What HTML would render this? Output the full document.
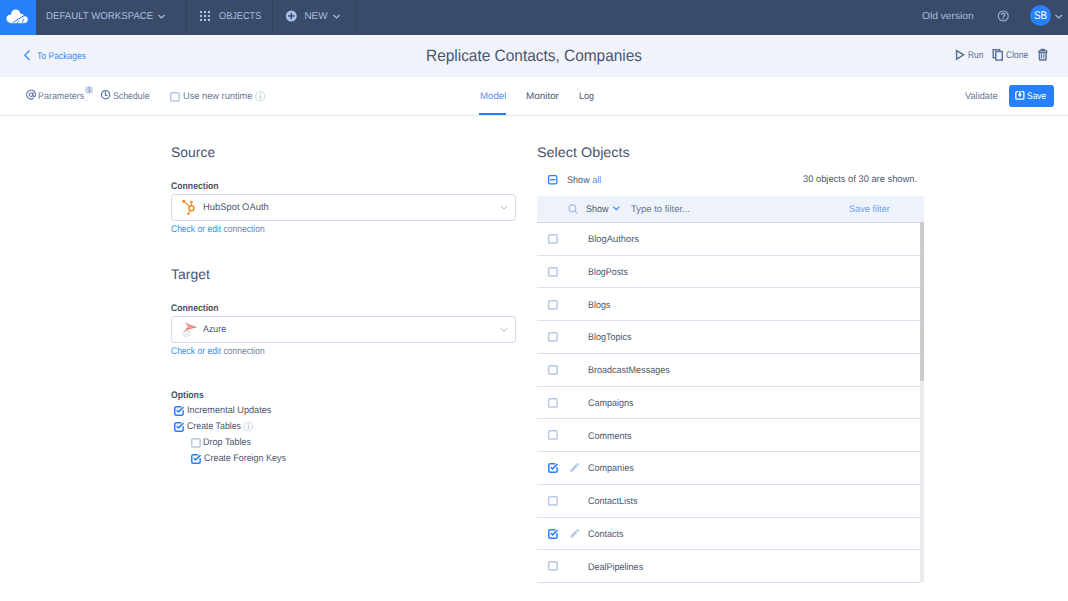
<!DOCTYPE html>
<html><head><meta charset="utf-8"><style>
html,body{margin:0;padding:0;width:1068px;height:601px;overflow:hidden;background:#fff;font-family:"Liberation Sans",sans-serif}
.t{position:absolute;white-space:nowrap;text-rendering:geometricPrecision}
svg.t{overflow:visible}
</style></head><body>
<div class="t" style="left:0px;top:0px;width:1068px;height:35px;background:#394b69"></div>
<div class="t" style="left:0px;top:0px;width:36px;height:35px;background:#2680fb"></div>
<svg class="t" style="left:0;top:0" width="36" height="35" viewBox="0 0 36 35">
<g fill="#fff"><circle cx="15.7" cy="14" r="4.6"/><circle cx="10.6" cy="18.6" r="4.2"/><circle cx="20.8" cy="17.2" r="3.4"/><circle cx="24.4" cy="19.6" r="3.4"/><rect x="10.4" y="17" width="14" height="6.2"/></g>
<path d="M12.8 22.6 L24 15.6" stroke="#2680fb" stroke-width="1" fill="none"/><path d="M22.3 23.2 L23.8 18.8" stroke="#2680fb" stroke-width="0.9"/><path d="M16.6 23.3 L19.5 20.8" stroke="#2680fb" stroke-width="0.8"/>
</svg>
<div class="t" style="left:186px;top:0px;width:1px;height:35px;background:#34435d"></div>
<div class="t" style="left:272px;top:0px;width:1px;height:35px;background:#34435d"></div>
<div class="t" style="left:355px;top:0px;width:1px;height:35px;background:#34435d"></div>
<div class="t" style="left:46.28px;top:12px;font-size:9.9px;line-height:9.9px;color:#a9bde0;font-weight:400;transform:scaleX(0.9770);transform-origin:0 0;">DEFAULT WORKSPACE</div>
<svg class="t" style="left:157px;top:13px" width="9" height="7"><path d="M1.5 2 L4.5 5 L7.5 2" stroke="#a9bde0" stroke-width="1.2" fill="none"/></svg>
<svg class="t" style="left:198px;top:9px" width="14" height="14"><rect x="1.95" y="1.95" width="2.1" height="2.1" fill="#a9c1e8"/><rect x="1.95" y="5.95" width="2.1" height="2.1" fill="#a9c1e8"/><rect x="1.95" y="9.95" width="2.1" height="2.1" fill="#a9c1e8"/><rect x="5.95" y="1.95" width="2.1" height="2.1" fill="#a9c1e8"/><rect x="5.95" y="5.95" width="2.1" height="2.1" fill="#a9c1e8"/><rect x="5.95" y="9.95" width="2.1" height="2.1" fill="#a9c1e8"/><rect x="9.95" y="1.95" width="2.1" height="2.1" fill="#a9c1e8"/><rect x="9.95" y="5.95" width="2.1" height="2.1" fill="#a9c1e8"/><rect x="9.95" y="9.95" width="2.1" height="2.1" fill="#a9c1e8"/></svg>
<div class="t" style="left:218.59px;top:12px;font-size:9.9px;line-height:9.9px;color:#a9bde0;font-weight:400;transform:scaleX(0.9297);transform-origin:0 0;">OBJECTS</div>
<svg class="t" style="left:284px;top:10px" width="14" height="14"><circle cx="7.3" cy="6.05" r="5.45" fill="#a9c1e8"/><path d="M7.3 2.9 V9.2 M4.1 6.05 H10.5" stroke="#394b69" stroke-width="1.45"/></svg>
<div class="t" style="left:304.46px;top:12px;font-size:9.9px;line-height:9.9px;color:#a9bde0;font-weight:400;">NEW</div>
<svg class="t" style="left:332px;top:13px" width="9" height="7"><path d="M1.5 2 L4.5 5 L7.5 2" stroke="#a9bde0" stroke-width="1.2" fill="none"/></svg>
<div class="t" style="left:921.74px;top:12px;font-size:9.9px;line-height:9.9px;color:#a9bde0;font-weight:400;transform:scaleX(1.0346);transform-origin:0 0;">Old version</div>
<svg class="t" style="left:996px;top:10px" width="14" height="13"><circle cx="7.3" cy="6" r="4.95" stroke="#94acd6" stroke-width="1.1" fill="none"/><path d="M5.6 4.9 Q5.6 3.1 7.3 3.1 Q9 3.1 9 4.6 Q9 5.5 8 6 Q7.3 6.4 7.3 7.3" stroke="#9cb4dd" stroke-width="1.3" fill="none"/><circle cx="7.3" cy="8.7" r="0.8" fill="#9cb4dd"/></svg>
<div class="t" style="left:1030px;top:5px;width:21px;height:21px;border-radius:50%;background:#2680fb"></div>
<div class="t" style="left:1033.86px;top:11px;font-size:11.2px;line-height:11.2px;color:#fff;font-weight:400;transform:scaleX(0.8711);transform-origin:0 0;">SB</div>
<svg class="t" style="left:1054px;top:13px" width="10" height="7"><path d="M1.5 2 L4.8 5 L8 2" stroke="#a9bde0" stroke-width="1.2" fill="none"/></svg>
<div class="t" style="left:0px;top:35px;width:1068px;height:42px;background:#f0f3f9"></div>
<svg class="t" style="left:22px;top:49px" width="10" height="13"><path d="M7.5 1.5 L2.8 6.3 L7.5 11" stroke="#3c8bf6" stroke-width="1.3" fill="none"/></svg>
<div class="t" style="left:37.18px;top:52px;font-size:9.6px;line-height:9.6px;color:#3c8bf6;font-weight:400;transform:scaleX(0.8929);transform-origin:0 0;">To Packages</div>
<div class="t" style="left:425.92px;top:48px;font-size:16.4px;line-height:16.4px;color:#4a5670;font-weight:400;transform:scaleX(0.9412);transform-origin:0 0;">Replicate Contacts, Companies</div>
<svg class="t" style="left:954px;top:48px" width="12" height="13"><path d="M2.6 2.6 L9.6 6.85 L2.6 11.1 Z" stroke="#5a6f96" stroke-width="1.45" stroke-linejoin="miter" fill="none"/></svg>
<div class="t" style="left:967.78px;top:51px;font-size:9.6px;line-height:9.6px;color:#5a6f96;font-weight:400;transform:scaleX(0.8691);transform-origin:0 0;">Run</div>
<svg class="t" style="left:991px;top:48px" width="14" height="14"><rect x="2.2" y="1.7" width="6.4" height="8" stroke="#5a6f96" stroke-width="1.4" fill="none"/><rect x="4.8" y="3.5" width="6.5" height="8.6" stroke="#5a6f96" stroke-width="1.4" fill="#f0f3f9"/></svg>
<div class="t" style="left:1005.73px;top:51px;font-size:9.6px;line-height:9.6px;color:#5a6f96;font-weight:400;transform:scaleX(0.8846);transform-origin:0 0;">Clone</div>
<svg class="t" style="left:1036px;top:48px" width="13" height="14"><rect x="2.8" y="2.7" width="8" height="2.1" rx="0.9" stroke="#5a6f96" stroke-width="1.4" fill="none"/><path d="M4.9 2.6 V1.9 Q4.9 1.3 5.5 1.3 H8.1 Q8.7 1.3 8.7 1.9 V2.6" stroke="#5a6f96" stroke-width="1.2" fill="none"/><path d="M3.5 5.2 V11.2 Q3.5 12.1 4.4 12.1 H9.2 Q10.1 12.1 10.1 11.2 V5.2" stroke="#5a6f96" stroke-width="1.5" fill="none"/><path d="M5.6 6.3 V10.6 M7.9 6.3 V10.6" stroke="#5a6f96" stroke-width="1.1"/></svg>
<div class="t" style="left:0px;top:115px;width:1068px;height:1px;background:#e6ebf2"></div>
<svg class="t" style="left:26px;top:89px" width="11" height="11"><circle cx="5.1" cy="5.6" r="1.9" stroke="#5f75a0" stroke-width="1.1" fill="none"/><path d="M7 3.6 V6.6 Q7.1 7.9 8.3 7.7 Q9.6 7.3 9.6 5.4 A4.5 4.5 0 1 0 7.6 9.3" stroke="#5f75a0" stroke-width="1.1" fill="none"/></svg>
<div class="t" style="left:38.14px;top:92px;font-size:9.6px;line-height:9.6px;color:#6a7894;font-weight:400;transform:scaleX(0.9303);transform-origin:0 0;">Parameters</div>
<div class="t" style="left:85px;top:85.6px;width:8.4px;height:8.4px;border-radius:50%;background:#cbd9f0"></div>
<div class="t" style="left:87.86px;top:87px;font-size:7px;line-height:7px;color:#56627a;font-weight:400;transform:scaleX(0.6977);transform-origin:0 0;">1</div>
<svg class="t" style="left:100px;top:89px" width="12" height="12"><circle cx="5.6" cy="5.7" r="4.1" stroke="#5f75a0" stroke-width="1.25" fill="none"/><path d="M5.4 2.7 V6.4 H7.5" stroke="#5f75a0" stroke-width="1.1" fill="none"/></svg>
<div class="t" style="left:112.61px;top:92px;font-size:9.6px;line-height:9.6px;color:#6a7894;font-weight:400;transform:scaleX(0.9140);transform-origin:0 0;">Schedule</div>
<svg class="t" style="left:169.90px;top:91.60px" width="12" height="11"><rect x="0.7" y="0.7" width="8.4" height="8.4" rx="1.1" stroke="#b6c8e8" stroke-width="1.5" fill="#fff"/></svg>
<div class="t" style="left:182.51px;top:92px;font-size:9.6px;line-height:9.6px;color:#6a7894;font-weight:400;transform:scaleX(0.9654);transform-origin:0 0;">Use new runtime</div>
<svg class="t" style="left:255px;top:91px" width="11" height="11"><circle cx="5.3" cy="5.4" r="4.6" stroke="#c3d1ea" stroke-width="0.9" fill="none"/><path d="M5.3 4.6 V8.2" stroke="#9fb3d6" stroke-width="1"/><circle cx="5.3" cy="3" r="0.6" fill="#9fb3d6"/></svg>
<div class="t" style="left:479.97px;top:92px;font-size:9.6px;line-height:9.6px;color:#5b8ef2;font-weight:400;transform:scaleX(1.0094);transform-origin:0 0;">Model</div>
<div class="t" style="left:479px;top:113px;width:27px;height:2px;background:#2680fb"></div>
<div class="t" style="left:526.06px;top:92px;font-size:9.6px;line-height:9.6px;color:#4b586d;font-weight:400;transform:scaleX(1.0288);transform-origin:0 0;">Monitor</div>
<div class="t" style="left:579.33px;top:92px;font-size:9.6px;line-height:9.6px;color:#4b586d;font-weight:400;transform:scaleX(0.9320);transform-origin:0 0;">Log</div>
<div class="t" style="left:965.46px;top:92px;font-size:9.6px;line-height:9.6px;color:#6a7894;font-weight:400;transform:scaleX(0.9608);transform-origin:0 0;">Validate</div>
<div class="t" style="left:1009px;top:85px;width:45px;height:21.5px;background:#2680fb;border-radius:3px"></div>
<svg class="t" style="left:1014px;top:90px" width="12" height="11"><path d="M4.3 1.6 H2.8 Q1.8 1.6 1.8 2.6 V8.2 Q1.8 9.2 2.8 9.2 H8.9 Q9.9 9.2 9.9 8.2 V2.6 Q9.9 1.6 8.9 1.6 H7.4" stroke="#fff" stroke-width="1.25" fill="none"/><path d="M5.85 0.9 V5" stroke="#fff" stroke-width="1.3"/><path d="M3.6 4.3 H8.1 L5.85 7.3 Z" fill="#fff"/></svg>
<div class="t" style="left:1027.33px;top:92px;font-size:9.6px;line-height:9.6px;color:#fff;font-weight:400;transform:scaleX(0.8792);transform-origin:0 0;">Save</div>
<div class="t" style="left:170.85px;top:146px;font-size:13.8px;line-height:13.8px;color:#4a5670;font-weight:400;transform:scaleX(1.0102);transform-origin:0 0;">Source</div>
<div class="t" style="left:171.20px;top:182px;font-size:9.6px;line-height:9.6px;color:#485366;font-weight:700;transform:scaleX(0.9028);transform-origin:0 0;">Connection</div>
<div class="t" style="left:171px;top:194px;width:343px;height:25px;border:1px solid #d3ddef;border-radius:3px;background:#fff"></div>
<svg class="t" style="left:176px;top:195px" width="30" height="25"><g fill="#f5891f" stroke="#f5891f"><path d="M15.4 8.2 V10.8 M7.7 6.2 L13.3 11.1 M12.3 18.9 L14.1 15.4" stroke-width="1.05" fill="none"/><circle cx="15.4" cy="13.2" r="2.55" stroke-width="1.5" fill="none"/><circle cx="15.4" cy="7.1" r="1.35" stroke="none"/><circle cx="7.7" cy="6.2" r="1.45" stroke="none"/><circle cx="12.3" cy="18.9" r="1.15" stroke="none"/></g></svg>
<div class="t" style="left:202.50px;top:203px;font-size:9.6px;line-height:9.6px;color:#4b586d;font-weight:400;transform:scaleX(0.9779);transform-origin:0 0;">HubSpot OAuth</div>
<svg class="t" style="left:500px;top:205px" width="9" height="6"><path d="M1 1.2 L4 4.2 L7 1.2" stroke="#a5b7d6" stroke-width="1" fill="none"/></svg>
<div class="t" style="left:171.12px;top:225px;font-size:9.6px;line-height:9.6px;color:#3c8bf6;font-weight:400;transform:scaleX(0.8867);transform-origin:0 0;">Check or edit <span style="color:#75839f">connection</span></div>
<div class="t" style="left:171.27px;top:268px;font-size:13.8px;line-height:13.8px;color:#4a5670;font-weight:400;transform:scaleX(1.0145);transform-origin:0 0;">Target</div>
<div class="t" style="left:171.20px;top:304px;font-size:9.6px;line-height:9.6px;color:#485366;font-weight:700;transform:scaleX(0.9028);transform-origin:0 0;">Connection</div>
<div class="t" style="left:171px;top:316px;width:343px;height:25px;border:1px solid #d3ddef;border-radius:3px;background:#fff"></div>
<svg class="t" style="left:176px;top:317px" width="30" height="25"><ellipse cx="10.6" cy="16.4" rx="3.8" ry="3.2" fill="#f1f2f5" stroke="#d9dce2" stroke-width="0.9"/><path d="M9.2 5.8 C12 7.4 16 9 20.4 10.2 C16 11 12 12.6 8.2 14.6 C10 12.4 11.2 10.4 11.2 8.8 Z" fill="#f6b3b3"/><path d="M9.2 5.8 C12 7.4 16 9 20.4 10.2 M11.2 8.4 L17.6 10.2 M10.2 11.6 L17 10.6 M8.2 14.6 C11 12.4 14 11 20.4 10.2" stroke="#e46a6a" stroke-width="0.6" fill="none"/></svg>
<div class="t" style="left:202.75px;top:325px;font-size:9.6px;line-height:9.6px;color:#4b586d;font-weight:400;transform:scaleX(0.9241);transform-origin:0 0;">Azure</div>
<svg class="t" style="left:500px;top:327.2px" width="9" height="6"><path d="M1 1.2 L4 4.2 L7 1.2" stroke="#a5b7d6" stroke-width="1" fill="none"/></svg>
<div class="t" style="left:171.12px;top:347px;font-size:9.6px;line-height:9.6px;color:#3c8bf6;font-weight:400;transform:scaleX(0.8867);transform-origin:0 0;">Check or edit <span style="color:#75839f">connection</span></div>
<div class="t" style="left:171.30px;top:391px;font-size:9.6px;line-height:9.6px;color:#485366;font-weight:700;transform:scaleX(0.9033);transform-origin:0 0;">Options</div>
<svg class="t" style="left:174.20px;top:406.20px" width="12" height="11"><path d="M7.3 0.75 H2.2 Q0.75 0.75 0.75 2.2 V7.7 Q0.75 9.15 2.2 9.15 H7.7 Q9.15 9.15 9.15 7.7 V4.3" stroke="#2680fb" stroke-width="1.5" fill="none"/><path d="M2.8 4.1 L4.5 5.9 L9.5 1.1" stroke="#2680fb" stroke-width="1.5" fill="none"/></svg>
<div class="t" style="left:186.73px;top:406px;font-size:9.6px;line-height:9.6px;color:#4b586d;font-weight:400;transform:scaleX(0.9535);transform-origin:0 0;">Incremental Updates</div>
<svg class="t" style="left:174.20px;top:422.20px" width="12" height="11"><path d="M7.3 0.75 H2.2 Q0.75 0.75 0.75 2.2 V7.7 Q0.75 9.15 2.2 9.15 H7.7 Q9.15 9.15 9.15 7.7 V4.3" stroke="#2680fb" stroke-width="1.5" fill="none"/><path d="M2.8 4.1 L4.5 5.9 L9.5 1.1" stroke="#2680fb" stroke-width="1.5" fill="none"/></svg>
<div class="t" style="left:187.11px;top:422px;font-size:9.6px;line-height:9.6px;color:#4b586d;font-weight:400;transform:scaleX(0.9147);transform-origin:0 0;">Create Tables</div>
<svg class="t" style="left:243px;top:421px" width="11" height="11"><circle cx="5.3" cy="5.5" r="4.4" stroke="#c3d1ea" stroke-width="0.9" fill="none"/><path d="M5.3 4.7 V8.2" stroke="#a8bbdc" stroke-width="1"/><circle cx="5.3" cy="3.2" r="0.6" fill="#a8bbdc"/></svg>
<svg class="t" style="left:191.20px;top:438.20px" width="12" height="11"><rect x="0.7" y="0.7" width="8.4" height="8.4" rx="1.1" stroke="#b6c8e8" stroke-width="1.5" fill="#fff"/></svg>
<div class="t" style="left:203.43px;top:438px;font-size:9.6px;line-height:9.6px;color:#4b586d;font-weight:400;transform:scaleX(0.9395);transform-origin:0 0;">Drop Tables</div>
<svg class="t" style="left:191.20px;top:454.20px" width="12" height="11"><path d="M7.3 0.75 H2.2 Q0.75 0.75 0.75 2.2 V7.7 Q0.75 9.15 2.2 9.15 H7.7 Q9.15 9.15 9.15 7.7 V4.3" stroke="#2680fb" stroke-width="1.5" fill="none"/><path d="M2.8 4.1 L4.5 5.9 L9.5 1.1" stroke="#2680fb" stroke-width="1.5" fill="none"/></svg>
<div class="t" style="left:203.70px;top:454px;font-size:9.6px;line-height:9.6px;color:#4b586d;font-weight:400;transform:scaleX(0.9304);transform-origin:0 0;">Create Foreign Keys</div>
<div class="t" style="left:536.73px;top:146px;font-size:13.8px;line-height:13.8px;color:#4a5670;font-weight:400;transform:scaleX(1.0425);transform-origin:0 0;">Select Objects</div>
<svg class="t" style="left:547px;top:174px" width="12" height="12"><rect x="1.6" y="1.6" width="8.2" height="8.2" rx="1.3" stroke="#2680fb" stroke-width="1.3" fill="none"/><path d="M3.1 5.7 H8.3" stroke="#2680fb" stroke-width="1.3"/></svg>
<div class="t" style="left:566.50px;top:176px;font-size:9.6px;line-height:9.6px;color:#4b586d;font-weight:400;transform:scaleX(0.9449);transform-origin:0 0;">Show <span style="color:#5b8ef2">all</span></div>
<div class="t" style="left:802.98px;top:175px;font-size:9.6px;line-height:9.6px;color:#4b586d;font-weight:400;transform:scaleX(0.9719);transform-origin:0 0;">30 objects of 30 are shown.</div>
<div class="t" style="left:537px;top:195.5px;width:387.4px;height:27px;background:#eef3fb;border-bottom:1px solid #c9d7ee;box-sizing:border-box"></div>
<svg class="t" style="left:567px;top:203px" width="12" height="12"><circle cx="5.3" cy="5.3" r="3.4" stroke="#a3bbe3" stroke-width="1.15" fill="none"/><path d="M7.8 7.8 L10.4 10.4" stroke="#a3bbe3" stroke-width="1.2"/></svg>
<div class="t" style="left:585.50px;top:205px;font-size:9.6px;line-height:9.6px;color:#4b586d;font-weight:400;transform:scaleX(0.9354);transform-origin:0 0;">Show</div>
<svg class="t" style="left:612px;top:205px" width="9" height="7"><path d="M1.2 1.6 L4.3 4.7 L7.4 1.6" stroke="#3c8bf6" stroke-width="1.3" fill="none"/></svg>
<div class="t" style="left:630.66px;top:205px;font-size:9.6px;line-height:9.6px;color:#6b7890;font-weight:400;transform:scaleX(0.9871);transform-origin:0 0;">Type to filter...</div>
<div class="t" style="left:849.39px;top:205px;font-size:9.6px;line-height:9.6px;color:#6ea1f2;font-weight:400;transform:scaleX(0.9561);transform-origin:0 0;">Save filter</div>
<div class="t" style="left:920px;top:222px;width:4px;height:360px;background:#ececec"></div>
<div class="t" style="left:920px;top:222px;width:4px;height:158.7px;background:#cbcbcb"></div>
<div class="t" style="left:537px;top:255px;width:383.5px;height:1px;background:#d5e0f1"></div>
<svg class="t" style="left:548.10px;top:234.10px" width="12" height="11"><rect x="0.7" y="0.7" width="8.4" height="8.4" rx="1.1" stroke="#b6c8e8" stroke-width="1.5" fill="#fff"/></svg>
<div class="t" style="left:587.80px;top:235px;font-size:9.6px;line-height:9.6px;color:#4b586d;font-weight:400;transform:scaleX(0.9752);transform-origin:0 0;">BlogAuthors</div>
<div class="t" style="left:537px;top:287px;width:383.5px;height:1px;background:#d5e0f1"></div>
<svg class="t" style="left:548.10px;top:266.83px" width="12" height="11"><rect x="0.7" y="0.7" width="8.4" height="8.4" rx="1.1" stroke="#b6c8e8" stroke-width="1.5" fill="#fff"/></svg>
<div class="t" style="left:587.84px;top:268px;font-size:9.6px;line-height:9.6px;color:#4b586d;font-weight:400;transform:scaleX(0.9254);transform-origin:0 0;">BlogPosts</div>
<div class="t" style="left:537px;top:320px;width:383.5px;height:1px;background:#d5e0f1"></div>
<svg class="t" style="left:548.10px;top:299.56px" width="12" height="11"><rect x="0.7" y="0.7" width="8.4" height="8.4" rx="1.1" stroke="#b6c8e8" stroke-width="1.5" fill="#fff"/></svg>
<div class="t" style="left:587.83px;top:301px;font-size:9.6px;line-height:9.6px;color:#4b586d;font-weight:400;transform:scaleX(0.9400);transform-origin:0 0;">Blogs</div>
<div class="t" style="left:537px;top:353px;width:383.5px;height:1px;background:#d5e0f1"></div>
<svg class="t" style="left:548.10px;top:332.29px" width="12" height="11"><rect x="0.7" y="0.7" width="8.4" height="8.4" rx="1.1" stroke="#b6c8e8" stroke-width="1.5" fill="#fff"/></svg>
<div class="t" style="left:587.83px;top:333px;font-size:9.6px;line-height:9.6px;color:#4b586d;font-weight:400;transform:scaleX(0.9400);transform-origin:0 0;">BlogTopics</div>
<div class="t" style="left:537px;top:386px;width:383.5px;height:1px;background:#d5e0f1"></div>
<svg class="t" style="left:548.10px;top:365.02px" width="12" height="11"><rect x="0.7" y="0.7" width="8.4" height="8.4" rx="1.1" stroke="#b6c8e8" stroke-width="1.5" fill="#fff"/></svg>
<div class="t" style="left:587.83px;top:366px;font-size:9.6px;line-height:9.6px;color:#4b586d;font-weight:400;transform:scaleX(0.9400);transform-origin:0 0;">BroadcastMessages</div>
<div class="t" style="left:537px;top:418px;width:383.5px;height:1px;background:#d5e0f1"></div>
<svg class="t" style="left:548.10px;top:397.75px" width="12" height="11"><rect x="0.7" y="0.7" width="8.4" height="8.4" rx="1.1" stroke="#b6c8e8" stroke-width="1.5" fill="#fff"/></svg>
<div class="t" style="left:588.10px;top:399px;font-size:9.6px;line-height:9.6px;color:#4b586d;font-weight:400;transform:scaleX(0.9400);transform-origin:0 0;">Campaigns</div>
<div class="t" style="left:537px;top:451px;width:383.5px;height:1px;background:#d5e0f1"></div>
<svg class="t" style="left:548.10px;top:430.48px" width="12" height="11"><rect x="0.7" y="0.7" width="8.4" height="8.4" rx="1.1" stroke="#b6c8e8" stroke-width="1.5" fill="#fff"/></svg>
<div class="t" style="left:588.10px;top:432px;font-size:9.6px;line-height:9.6px;color:#4b586d;font-weight:400;transform:scaleX(0.9400);transform-origin:0 0;">Comments</div>
<div class="t" style="left:537px;top:484px;width:383.5px;height:1px;background:#d5e0f1"></div>
<svg class="t" style="left:548.10px;top:463.21px" width="12" height="11"><path d="M7.3 0.75 H2.2 Q0.75 0.75 0.75 2.2 V7.7 Q0.75 9.15 2.2 9.15 H7.7 Q9.15 9.15 9.15 7.7 V4.3" stroke="#2680fb" stroke-width="1.5" fill="none"/><path d="M2.8 4.1 L4.5 5.9 L9.5 1.1" stroke="#2680fb" stroke-width="1.5" fill="none"/></svg>
<svg class="t" style="left:569px;top:463.1px" width="11" height="11"><path d="M1.2 8.9 L1.69 6.57 L6.64 1.62 L8.48 3.46 L3.53 8.41 Z" fill="#b9cbea"/><path d="M7.0 1.26 L8.06 0.2 Q8.7 -0.2 9.4 0.5 L9.9 1.0 Q10.4 1.6 9.9 2.04 L8.84 3.10 Z" fill="#b3c6e8"/><path d="M2.4 7.7 L7.3 2.8" stroke="#a9bfe4" stroke-width="0.6"/></svg>
<div class="t" style="left:587.60px;top:464px;font-size:9.6px;line-height:9.6px;color:#4b586d;font-weight:400;transform:scaleX(0.9411);transform-origin:0 0;">Companies</div>
<div class="t" style="left:537px;top:517px;width:383.5px;height:1px;background:#d5e0f1"></div>
<svg class="t" style="left:548.10px;top:495.94px" width="12" height="11"><rect x="0.7" y="0.7" width="8.4" height="8.4" rx="1.1" stroke="#b6c8e8" stroke-width="1.5" fill="#fff"/></svg>
<div class="t" style="left:588.10px;top:497px;font-size:9.6px;line-height:9.6px;color:#4b586d;font-weight:400;transform:scaleX(0.9400);transform-origin:0 0;">ContactLists</div>
<div class="t" style="left:537px;top:549px;width:383.5px;height:1px;background:#d5e0f1"></div>
<svg class="t" style="left:548.10px;top:528.67px" width="12" height="11"><path d="M7.3 0.75 H2.2 Q0.75 0.75 0.75 2.2 V7.7 Q0.75 9.15 2.2 9.15 H7.7 Q9.15 9.15 9.15 7.7 V4.3" stroke="#2680fb" stroke-width="1.5" fill="none"/><path d="M2.8 4.1 L4.5 5.9 L9.5 1.1" stroke="#2680fb" stroke-width="1.5" fill="none"/></svg>
<svg class="t" style="left:569px;top:528.6px" width="11" height="11"><path d="M1.2 8.9 L1.69 6.57 L6.64 1.62 L8.48 3.46 L3.53 8.41 Z" fill="#b9cbea"/><path d="M7.0 1.26 L8.06 0.2 Q8.7 -0.2 9.4 0.5 L9.9 1.0 Q10.4 1.6 9.9 2.04 L8.84 3.10 Z" fill="#b3c6e8"/><path d="M2.4 7.7 L7.3 2.8" stroke="#a9bfe4" stroke-width="0.6"/></svg>
<div class="t" style="left:588.10px;top:530px;font-size:9.6px;line-height:9.6px;color:#4b586d;font-weight:400;transform:scaleX(0.9400);transform-origin:0 0;">Contacts</div>
<div class="t" style="left:537px;top:582px;width:383.5px;height:1px;background:#d5e0f1"></div>
<svg class="t" style="left:548.10px;top:561.40px" width="12" height="11"><rect x="0.7" y="0.7" width="8.4" height="8.4" rx="1.1" stroke="#b6c8e8" stroke-width="1.5" fill="#fff"/></svg>
<div class="t" style="left:587.83px;top:563px;font-size:9.6px;line-height:9.6px;color:#4b586d;font-weight:400;transform:scaleX(0.9400);transform-origin:0 0;">DealPipelines</div>
</body></html>
